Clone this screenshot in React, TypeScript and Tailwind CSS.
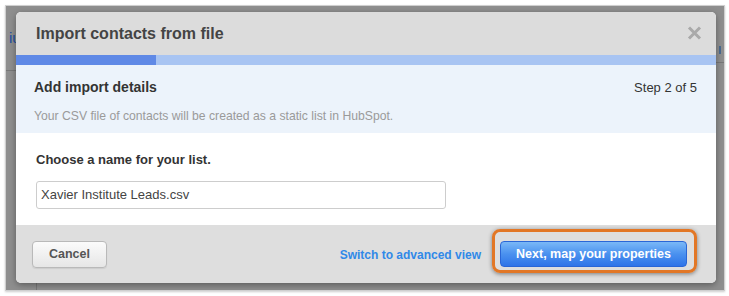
import React from "react";

export default function App() {
  const font = { fontFamily: '"Liberation Sans", Arial, sans-serif' };
  return (
    <div className="w-[729px] h-[296px] bg-white overflow-hidden" style={font}>
      <div className="ml-[5px] mt-[5px] w-[720px] h-[286px] border border-[#cfcfcf] bg-[#8e8e8e] relative overflow-hidden shadow-[0_1px_2px_rgba(0,0,0,0.2)]">
        <div className="absolute left-[3px] top-[21px] text-[15px] text-[#1f4fa0]">iu</div>
        <div className="absolute left-0 top-[64px] w-[12px] h-px bg-[#777]" />
        <div className="absolute right-0 top-[56px] w-[8px] h-px bg-[#777]" />
        <div className="absolute right-[3px] top-[40px] w-[2px] h-[8px] bg-[#4a6a90]" />
        <div className="absolute left-[30px] bottom-0 w-px h-[8px] bg-[#777]" />
        <div className="absolute left-[10px] top-[6px] w-[700px] h-[271px] rounded-[5px] bg-white overflow-hidden flex flex-col shadow-[0_2px_6px_rgba(0,0,0,0.35)]">
          <div className="h-[43px] bg-[#dcdcdc] flex items-center justify-between pl-[20px] pr-[14px]">
            <div className="text-[16px] font-bold text-[#444]">Import contacts from file</div>
            <svg width="15" height="14" viewBox="0 0 15 14" className="mt-[-2px]">
              <path d="M2 1.5 L13 12.5 M13 1.5 L2 12.5" stroke="#a9a9a9" strokeWidth="3" strokeLinecap="butt" />
            </svg>
          </div>
          <div className="h-[10px] bg-[#a8c4f2] flex">
            <div className="w-[140px] h-full bg-[#5f89e6]" />
          </div>
          <div className="h-[68px] bg-[#ecf3fb] pl-[18px] pr-[19px] pt-[12px]">
            <div className="flex items-center justify-between">
              <div className="text-[14px] font-bold text-[#333]">Add import details</div>
              <div className="text-[13px] text-[#333]">Step 2 of 5</div>
            </div>
            <div className="mt-[9px] text-[12.2px] text-[#9a9a9a]">
              Your CSV file of contacts will be created as a static list in HubSpot.
            </div>
          </div>
          <div className="h-[92px] bg-white pl-[20px] pt-[19px]">
            <div className="text-[13px] font-bold text-[#333] leading-[16px]">Choose a name for your list.</div>
            <div className="mt-[13px] w-[410px] h-[28px] border border-[#cdcdcd] rounded-[3px] flex items-center pl-[4px] text-[13px] text-[#444]">
              Xavier Institute Leads.csv
            </div>
          </div>
          <div className="flex-1 bg-[#dedede] flex items-center pl-[16px] pr-[19px] relative">
            <div className="w-[75px] h-[27px] rounded-[4px] border border-[#b9b9b9] bg-gradient-to-b from-[#fbfbfb] to-[#e6e6e6] flex items-center justify-center text-[12.5px] font-bold text-[#555] shadow-[0_1px_1px_rgba(0,0,0,0.08)]">
              Cancel
            </div>
            <div className="ml-auto text-[12px] font-bold text-[#3089e8] mr-[11px] mt-[1px]">Switch to advanced view</div>
            <div className="rounded-[8px] border-[3px] border-[#e27726] pl-[5px] pr-[7px] pt-[9px] pb-[3px] shadow-[0_1px_4px_rgba(0,0,0,0.45)] mt-[-6px]">
              <div className="w-[187px] h-[26px] rounded-[4px] border border-[#2a66d6] bg-gradient-to-b from-[#7ab8f7] via-[#4a91ef] to-[#2f74e8] flex items-center justify-center text-[12.5px] font-bold text-white">
                Next, map your properties
              </div>
            </div>
          </div>
        </div>
      </div>
    </div>
  );
}
